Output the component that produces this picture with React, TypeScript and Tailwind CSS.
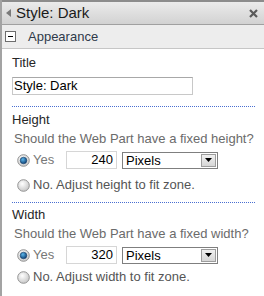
import React from "react";

const font = { fontFamily: '"Liberation Sans", Arial, sans-serif' };

function Radio({ checked }: { checked?: boolean }) {
  return (
    <svg width="13" height="13" viewBox="0 0 13 13" className="shrink-0">
      <defs>
        <radialGradient id={checked ? "rc" : "ru"} cx="40%" cy="35%" r="70%">
          <stop offset="0%" stopColor="#ffffff" />
          <stop offset="100%" stopColor="#c4c4c4" />
        </radialGradient>
        <radialGradient id="dot" cx="40%" cy="35%" r="70%">
          <stop offset="0%" stopColor="#5cb6ea" />
          <stop offset="100%" stopColor="#08396e" />
        </radialGradient>
      </defs>
      <circle cx="6.5" cy="6.5" r="5.8" fill={`url(#${checked ? "rc" : "ru"})`} stroke="#949494" strokeWidth="1" />
      {checked && <circle cx="6.5" cy="6.5" r="3.3" fill="url(#dot)" stroke="#163f6b" strokeWidth="0.6" />}
    </svg>
  );
}

function Select() {
  return (
    <div className="flex h-[17px] w-[96px] items-center border border-[#7f7f7f] bg-white">
      <span className="flex-1 pl-[3px] text-[13px] leading-[15px] text-black">Pixels</span>
      <div className="mr-[1px] flex h-[13px] w-[15px] items-center justify-center border border-[#9d9d9d] bg-gradient-to-b from-[#f0f0f0] to-[#d6d6d6]">
        <svg width="7" height="4" viewBox="0 0 7 4">
          <path d="M0 0 L7 0 L3.5 4 Z" fill="#000" />
        </svg>
      </div>
    </div>
  );
}

function SizeSection({ label, question, value, noText, compact }: { label: string; question: string; value: string; noText: string; compact?: boolean }) {
  return (
    <div className="flex flex-col">
      <div className="text-[13px] leading-[16px] text-[#262626]">{label}</div>
      <div className="mt-[3px] pl-[2px] text-[13px] leading-[16px] text-[#6b6b6b]">{question}</div>
      <div className="mt-[4px] flex items-center pl-[5px]">
        <Radio checked />
        <span className="ml-[3px] w-[33px] text-[13px] leading-[16px] text-[#777]">Yes</span>
        <div className="flex h-[18px] w-[51px] items-center justify-end border border-[#d6d6d6] pr-[3px] text-[13px] text-black">{value}</div>
        <div className="ml-[5px]">
          <Select />
        </div>
      </div>
      <div className={compact ? "mt-[5px] flex items-center pl-[5px]" : "mt-[8px] flex items-center pl-[5px]"}>
        <Radio />
        <span className="ml-[3px] text-[13px] leading-[16px] text-[#555]">{noText}</span>
      </div>
    </div>
  );
}

export default function App() {
  return (
    <div className="h-[296px] w-[264px] overflow-hidden border-l-2 border-[#a3a3a3] bg-white" style={font}>
      <div className="flex h-[25px] items-center border-t-2 border-b border-t-[#8c8c8c] border-b-[#a0a0a0] bg-gradient-to-b from-[#ebebeb] to-[#d2d2d2]">
        <svg width="6" height="8" viewBox="0 0 6 8" className="ml-[4px]">
          <path d="M5 0 L5 8 L0 4 Z" fill="#7a7a7a" />
        </svg>
        <span className="ml-[4px] text-[15px] leading-[18px] text-[#1a1a1a]">Style: Dark</span>
        <div className="flex-1" />
        <svg width="9" height="9" viewBox="0 0 9 9" className="mr-[6px]">
          <path d="M1 1 L8 8 M8 1 L1 8" stroke="#5a5a5a" strokeWidth="2.2" />
        </svg>
      </div>
      <div className="flex h-[24px] items-center border-b border-[#c6c6c6] bg-[#ededed]">
        <div className="ml-[3px] flex h-[11px] w-[11px] items-center justify-center border border-[#6d6d6d] bg-white">
          <div className="h-[1px] w-[5px] bg-black" />
        </div>
        <span className="ml-[12px] text-[13px] leading-[16px] text-[#2f3a4a]">Appearance</span>
      </div>
      <div className="pl-[10px] pr-[9px] pt-[6px]">
        <div className="text-[13px] leading-[16px] text-[#262626]">Title</div>
        <div className="mt-[6px] flex h-[18px] w-[181px] items-center border border-[#c8c8c8] border-t-[#a8a8a8] pl-[1px] text-[13px] text-black">
          Style: Dark
        </div>
        <div className="mt-[11px] border-t border-dotted border-[#4a6fd1]" />
        <div className="mt-[5px]">
          <SizeSection label="Height" question="Should the Web Part have a fixed height?" value="240" noText="No. Adjust height to fit zone." />
        </div>
        <div className="mt-[9px] border-t border-dotted border-[#4a6fd1]" />
        <div className="mt-[4px]">
          <SizeSection label="Width" question="Should the Web Part have a fixed width?" value="320" noText="No. Adjust width to fit zone." compact />
        </div>
      </div>
    </div>
  );
}
